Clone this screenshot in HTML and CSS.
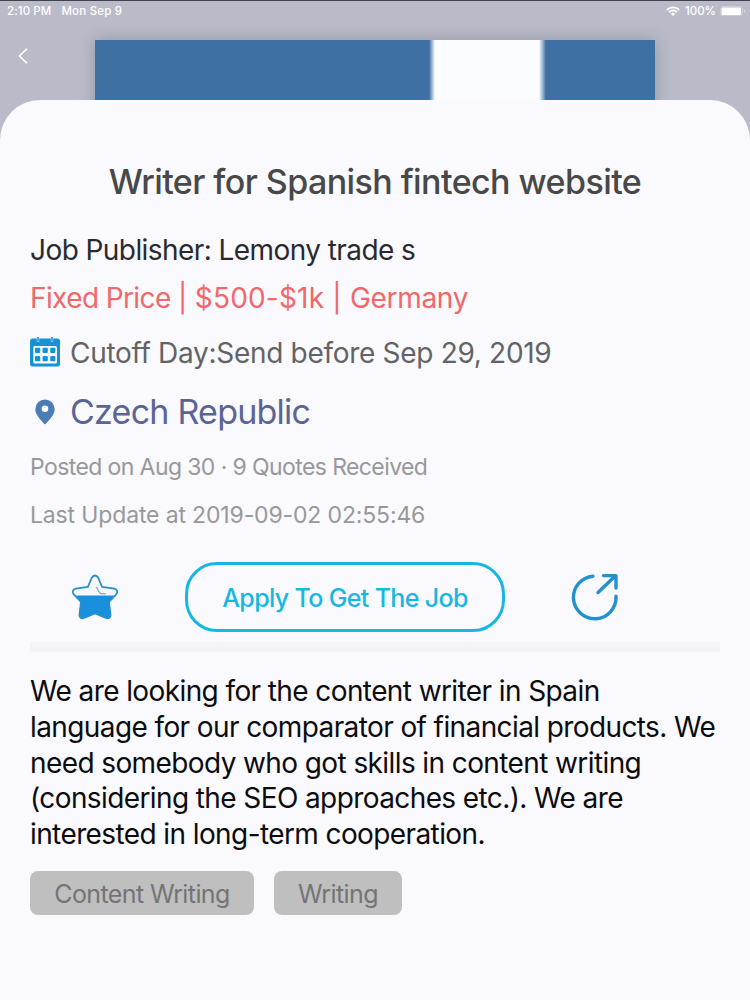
FILE: index.html
```html
<!DOCTYPE html>
<html lang="en">
<head>
    <meta charset="UTF-8">
    <meta name="viewport" content="width=device-width, initial-scale=1.0">
    <title>Writer for Spanish fintech website</title>
    <link rel="stylesheet" href="styles.css">
</head>
<body>
    <div class="screen">
        <header class="status-bar">
            <span class="status-time">2:10 PM</span>
            <span class="status-date">Mon Sep 9</span>
            <svg class="wifi-icon" viewBox="0 0 14 10" width="14" height="10" fill="none" stroke="#fff" stroke-width="1.8">
                <path d="M0.8 3.8a9 9 0 0 1 12.4 0"/>
                <path d="M3 6.1a5.8 5.8 0 0 1 8 0"/>
                <path d="M7 10L4.9 7.9a3 3 0 0 1 4.2 0z" fill="#fff" stroke="none"/>
            </svg>
            <span class="status-battery">100%</span>
            <svg class="battery-icon" viewBox="0 0 26 10" width="26" height="10">
                <rect x="0.5" y="0.5" width="22" height="9" rx="2.5" fill="none" stroke="#fff" stroke-opacity="0.25"/>
                <rect x="1.5" y="1.5" width="19.5" height="7.5" rx="1" fill="#fff"/>
                <path d="M24 3.2v3.6a2 2 0 0 0 0-3.6z" fill="#fff" fill-opacity="0.45"/>
            </svg>
        </header>

        <div class="hero">
            <a href="#" class="back-link" aria-label="Back">
                <svg viewBox="0 0 10 16" width="10" height="16" fill="none" stroke="#fff" stroke-width="1.6">
                    <path d="M9 0.8L1.4 8L9 15.2"/>
                </svg>
            </a>
            <div class="flag"></div>
        </div>

        <main class="sheet">
            <h1 class="job-title">Writer for Spanish fintech website</h1>

            <p class="job-publisher">Job Publisher: Lemony trade s</p>
            <p class="job-price"><span class="price-type">Fixed Price |</span> $500-$1k | <span class="price-country">Germany</span></p>

            <div class="job-cutoff">
                <svg class="calendar-icon" viewBox="0 0 30 30" width="30" height="30">
                    <rect x="0" y="0.5" width="30" height="28" rx="2.5" fill="#1692d6"/>
                    <path d="M8 -1v4.500M22 -1v4.5" stroke="#f9f9fe" stroke-width="2.4"/>
                    <path d="M8 -1v4M22 -1v4" stroke="#1692d6" stroke-width="1.6"/>
                    <rect x="3.3" y="8" width="23.7" height="17.5" rx="1.5" fill="#f9f9fe"/>
                    <g fill="#1692d6">
                        <rect x="5" y="9.8" width="5.2" height="5.2" rx="1"/>
                        <rect x="12.6" y="9.8" width="5.2" height="5.2" rx="1"/>
                        <rect x="20.2" y="9.8" width="5.2" height="5.2" rx="1"/>
                        <rect x="5" y="18" width="5.2" height="5.2" rx="1"/>
                        <rect x="12.6" y="18" width="5.2" height="5.2" rx="1"/>
                        <rect x="20.2" y="18" width="5.2" height="5.2" rx="1"/>
                    </g>
                </svg>
                <span>Cutoff Day:Send before Sep 29, 2019</span>
            </div>

            <div class="job-location">
                <svg viewBox="0 0 30 30" width="30" height="30">
                    <path d="M15 3.500a9.700 9.700 0 0 0-9.700 9.700c0 5.800 6.200 11.400 9.100 14.800a0.800 0.800 0 0 0 1.200 0c2.900-3.400 9.100-9 9.100-14.800a9.700 9.700 0 0 0-9.700-9.700z" fill="#4a7cb5"/>
                    <circle cx="15" cy="12.800" r="3.3" fill="#f9f9fe"/>
                </svg>
                <span>Czech Republic</span>
            </div>

            <p class="job-meta">Posted on Aug 30 · 9 Quotes Received</p>
            <p class="job-meta job-updated">Last Update at 2019-09-02 02:55:46</p>

            <div class="actions">
                <a href="#" class="action-icon" aria-label="Favorite">
                    <svg viewBox="0 0 48 48" width="48" height="48">
                        <path d="M5 22.500h38l-5 7 1.500 12c0.300 3-2 4.500-4.500 3.500l-11-4.500-11 4.500c-2.500 1-4.800-0.500-4.500-3.500l1.500-12z" fill="#1890db"/>
                        <path d="M21 4.500c1.300-2.700 4.700-2.700 6 0l4.200 9.500 12 1.700c3.300 0.700 4 3.800 1.800 6l-7 7.300 1.500 12.500c0.300 3-2 4.500-4.500 3.500l-11-4.500-11 4.500c-2.500 1-4.800-0.500-4.500-3.500l1.500-12.500-7-7.300c-2.200-2.200-1.500-5.300 1.800-6l12-1.700z" fill="none" stroke="#2590cf" stroke-width="1.8"/>
                        <path d="M25 14c2 1.200 2.300 5.200 4.500 6.300 2 0.700 4-0.300 5.500 0.800" fill="none" stroke="#6faedb" stroke-width="1.3"/>
                    </svg>
                </a>
                <a href="#" class="apply-button">Apply To Get The Job</a>
                <a href="#" class="action-icon" aria-label="Share">
                    <svg viewBox="0 0 48 48" width="48" height="48" fill="none" stroke="#2491cf" stroke-width="3.4" stroke-linecap="round" stroke-linejoin="round">
                        <path d="M22 3.200a21.300 21.300 0 1 0 23 20"/>
                        <path d="M27 19.500L44.500 2.800M32.500 2.600h12.500v12.500"/>
                    </svg>
                </a>
            </div>

            <div class="divider"></div>

            <p class="job-description">We are looking for the content writer in Spain<br>language for our comparator of financial products. We<br>need somebody who got skills in content writing<br>(considering the SEO approaches etc.). We are<br>interested in long-term cooperation.</p>

            <div class="tags">
                <span class="tag">Content Writing</span>
                <span class="tag tag-short">Writing</span>
            </div>
        </main>
    </div>
</body>
</html>
```

FILE: styles.css
```css
:root {
    --sheet-color: #f9f9fe;
    --backdrop-color: #babbc8;
    --flag-color: #3e70a3;
    --accent-color: #17b7e2;
}

*,
*::before,
*::after {
    margin: 0;
    padding: 0;
    box-sizing: border-box;
}

body {
    font-family: Inter, "Liberation Sans", sans-serif;
    background-color: var(--backdrop-color);
}

a {
    color: inherit;
    text-decoration: none;
}

svg {
    display: block;
    flex-shrink: 0;
}

.screen {
    display: flex;
    flex-direction: column;
    width: 750px;
    height: 1000px;
    border-top: 1px solid #43414e;
    overflow: hidden;
}

.status-bar {
    display: flex;
    align-items: center;
    height: 19px;
    padding: 0 4px 0 7px;
    color: #fff;
    font-size: 11.5px;
    font-weight: 500;
}

.status-time {
    letter-spacing: 0.1px;
}

.status-date {
    margin-left: 10px;
    letter-spacing: 0.2px;
}

.wifi-icon {
    margin-left: auto;
}

.status-battery {
    margin: 0 4px 0 5px;
}

.hero {
    display: flex;
    height: 80px;
    padding-top: 20px;
}

.back-link {
    width: 95px;
    padding: 8px 0 0 18px;
}

.flag {
    width: 560px;
    height: 80px;
    background: linear-gradient(90deg, var(--flag-color) 334px, #fafcff 340px, #fafcff 444px, var(--flag-color) 451px);
    box-shadow: 0 0 14px rgba(60, 60, 80, 0.3);
}

.sheet {
    position: relative;
    flex: 1;
    padding: 60px 30px 0;
    background-color: var(--sheet-color);
    border-radius: 40px 40px 0 0;
}

.job-title {
    height: 44px;
    line-height: 44px;
    text-align: center;
    white-space: nowrap;
    color: #484848;
    font-size: 34px;
    font-weight: 500;
    letter-spacing: -0.57px;
}

.job-publisher,
.job-price {
    line-height: 36px;
    font-size: 28px;
}

.job-publisher {
    margin-top: 28px;
    color: #2a2a2e;
    letter-spacing: -0.57px;
}

.job-price {
    margin-top: 12px;
    color: #f0686a;
    letter-spacing: 0.2px;
}

.price-type {
    letter-spacing: -0.6px;
}

.price-country {
    letter-spacing: -0.3px;
}

.job-cutoff,
.job-location {
    display: flex;
    align-items: center;
    gap: 10px;
}

.job-cutoff {
    height: 36px;
    margin-top: 19px;
    color: #636366;
    font-size: 28px;
    letter-spacing: -0.3px;
}

.calendar-icon {
    overflow: visible;
}

.job-location {
    height: 44px;
    margin-top: 18px;
    color: #5b6593;
    font-size: 34px;
    letter-spacing: -0.76px;
}

.job-meta {
    margin-top: 18px;
    line-height: 33px;
    color: #98989c;
    font-size: 23px;
    letter-spacing: -0.6px;
}

.job-updated {
    margin-top: 15px;
    letter-spacing: -0.15px;
}

.actions {
    display: flex;
    align-items: center;
    justify-content: space-between;
    height: 70px;
    margin-top: 30px;
    padding: 0 101px 0 41px;
}

.apply-button {
    width: 320px;
    height: 70px;
    line-height: 66px;
    border: 3px solid var(--accent-color);
    border-radius: 32px;
    text-align: center;
    color: var(--accent-color);
    font-size: 25px;
    font-weight: 500;
    letter-spacing: -0.65px;
}

.divider {
    height: 10px;
    margin-top: 10px;
    background-color: #f4f4f8;
}

.job-description {
    margin-top: 22px;
    line-height: 35.8px;
    white-space: nowrap;
    color: #0c0c0e;
    font-size: 28px;
    letter-spacing: -0.6px;
}

.tags {
    display: flex;
    gap: 20px;
    margin-top: 17.6px;
}

.tag {
    width: 224px;
    height: 44px;
    line-height: 46px;
    border-radius: 8px;
    background-color: #bfbfc0;
    text-align: center;
    color: #747476;
    font-size: 25px;
    letter-spacing: -0.6px;
}

.tag-short {
    width: 128px;
}
```
